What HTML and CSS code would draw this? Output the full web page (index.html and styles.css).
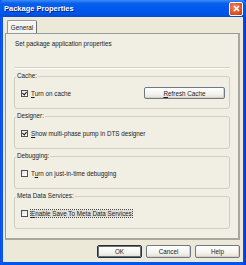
FILE: index.html
```html
<!DOCTYPE html>
<html lang="en">
<head>
    <meta charset="UTF-8">
    <title>Package Properties</title>
    <link rel="stylesheet" href="styles.css">
</head>
<body>

<div class="window">
    <div class="titlebar">
        <span class="title">Package Properties</span>
        <span class="close">
            <svg width="7" height="7" viewBox="0 0 7 7"><path d="M1 1 L6 6 M6 1 L1 6" stroke="#fff" stroke-width="1.6" fill="none"/></svg>
        </span>
    </div>

    <div class="client">
        <div class="tabs">
            <span class="tab">General</span>
        </div>

        <div class="panel">
            <p class="intro">Set package application properties</p>
            <div class="rule"></div>

            <fieldset class="group">
                <legend>Cache:</legend>
                <div class="row">
                    <label class="check"><span class="box checked"></span><span><u>T</u>urn on cache</span></label>
                    <button class="btn refresh"><u>R</u>efresh Cache</button>
                </div>
            </fieldset>

            <fieldset class="group">
                <legend>Designer:</legend>
                <div class="row">
                    <label class="check"><span class="box checked"></span><span><u>S</u>how multi-phase pump in DTS designer</span></label>
                </div>
            </fieldset>

            <fieldset class="group">
                <legend>Debugging:</legend>
                <div class="row">
                    <label class="check"><span class="box"></span><span>T<u>u</u>rn on just-in-time debugging</span></label>
                </div>
            </fieldset>

            <fieldset class="group">
                <legend>Meta Data Services:</legend>
                <div class="row">
                    <label class="check"><span class="box"></span><span class="focused"><u>E</u>nable Save To Meta Data Services</span></label>
                </div>
            </fieldset>
        </div>

        <div class="buttons">
            <button class="btn default">OK</button>
            <button class="btn">Cancel</button>
            <button class="btn">Help</button>
        </div>
    </div>
</div>

</body>
</html>
```

FILE: styles.css
```css
body {
    margin: 0;
    font-family: "Liberation Sans", Arial, sans-serif;
    font-size: 6.3px;
    color: #1A1A1A;
}

.window {
    width: 246px;
    height: 265px;
    box-sizing: border-box;
    padding: 0 3px 3px 3px;
    display: flex;
    flex-direction: column;
    background: linear-gradient(to right, #0831D9, #166AEE 1px, #0055EA 2px, #0055EA 243px, #0831D9);
}

/* title bar */
.titlebar {
    height: 17px;
    margin: 0 -3px;
    padding: 0 2px 0 4px;
    display: flex;
    align-items: center;
    justify-content: space-between;
    border-radius: 4px 4px 0 0;
    background: linear-gradient(#3C8CF8, #0A5FEA 20%, #0058EE 50%, #0055E5 80%, #0049D4);
}

.title {
    color: #fff;
    font-weight: bold;
    font-size: 7.5px;
    text-shadow: 1px 1px 0 #0A1E80;
}

.close {
    width: 12px;
    height: 12px;
    margin-right: 1px;
    display: flex;
    align-items: center;
    justify-content: center;
    border: 1px solid #fff;
    border-radius: 2px;
    background: radial-gradient(circle at 40% 35%, #F08A64, #DA4A22 70%, #C0381A);
}

/* client area */
.client {
    flex: 1;
    display: flex;
    flex-direction: column;
    padding: 3px 3px 4px 2px;
    background-color: #ECE9D8;
}

.tabs {
    height: 13px;
    display: flex;
    padding-left: 2px;
}

.tab {
    width: 30px;
    height: 13px;
    box-sizing: border-box;
    margin-bottom: -1px;
    position: relative;
    z-index: 1;
    display: flex;
    align-items: center;
    justify-content: center;
    border: 1px solid #919B9C;
    border-bottom: none;
    border-right-color: #6E6E6E;
    border-radius: 2px 2px 0 0;
    background-color: #F5F4EE;
    box-shadow: inset 0 1px 0 #FFFFFF;
}

.panel {
    height: 207px;
    box-sizing: border-box;
    padding: 0 8px;
    border: 1px solid #919B9C;
    border-right: 2px solid #A8A8A0;
    border-bottom-width: 2px;
    border-bottom-color: #A8A8A0;
    background-color: #F1EFE4;
}

.intro {
    margin: 6px 0 0 1px;
    line-height: 8px;
}

.rule {
    height: 0;
    margin: 19px 0 3px 1px;
    border-top: 1px solid #D0D0BF;
    border-bottom: 1px solid #FFFFFF;
}

/* group boxes */
.group {
    height: 37px;
    box-sizing: border-box;
    margin: 0 0 3px 0;
    padding: 7px 4px 9px 6px;
    border: 1px solid #D0D0BF;
    border-radius: 3px;
    min-width: 0;
}

.group legend {
    margin-left: -5px;
    padding: 0 1px;
    line-height: 8px;
}

.row {
    height: 12px;
    display: flex;
    align-items: center;
    justify-content: space-between;
}

.check {
    display: flex;
    align-items: center;
    gap: 3px;
}

.box {
    width: 7px;
    height: 7px;
    box-sizing: border-box;
    border: 1px solid #4A5260;
    background: linear-gradient(135deg, #E4E3DD, #FFFFFF);
    position: relative;
}

.box.checked::after {
    content: "";
    position: absolute;
    left: 1px;
    top: 0;
    width: 2px;
    height: 3px;
    border-right: 1px solid #111;
    border-bottom: 1px solid #111;
    transform: rotate(40deg);
}

.focused {
    outline: 1px dotted #444;
    outline-offset: 0;
    background-color: #E2E0D6;
}

u {
    text-decoration-thickness: 0.6px;
    text-underline-offset: 1px;
}

/* buttons */
.btn {
    height: 13px;
    width: 45px;
    padding: 0;
    font-family: "Liberation Sans", Arial, sans-serif;
    font-size: 6.3px;
    color: #1A1A1A;
    border: 1px solid #6F7A86;
    border-radius: 2px;
    background: linear-gradient(#FFFFFF, #F4F3EE 60%, #E3E0D6);
    box-shadow: inset -1px -1px 0 #D6D0C5;
}

.btn.refresh {
    width: 81px;
    height: 12px;
}

.btn.default {
    border-color: #2A2F36;
    box-shadow: inset 0 0 0 1px #66707C;
}

.buttons {
    margin-top: 5px;
    display: flex;
    justify-content: flex-end;
    gap: 4px;
}
```
